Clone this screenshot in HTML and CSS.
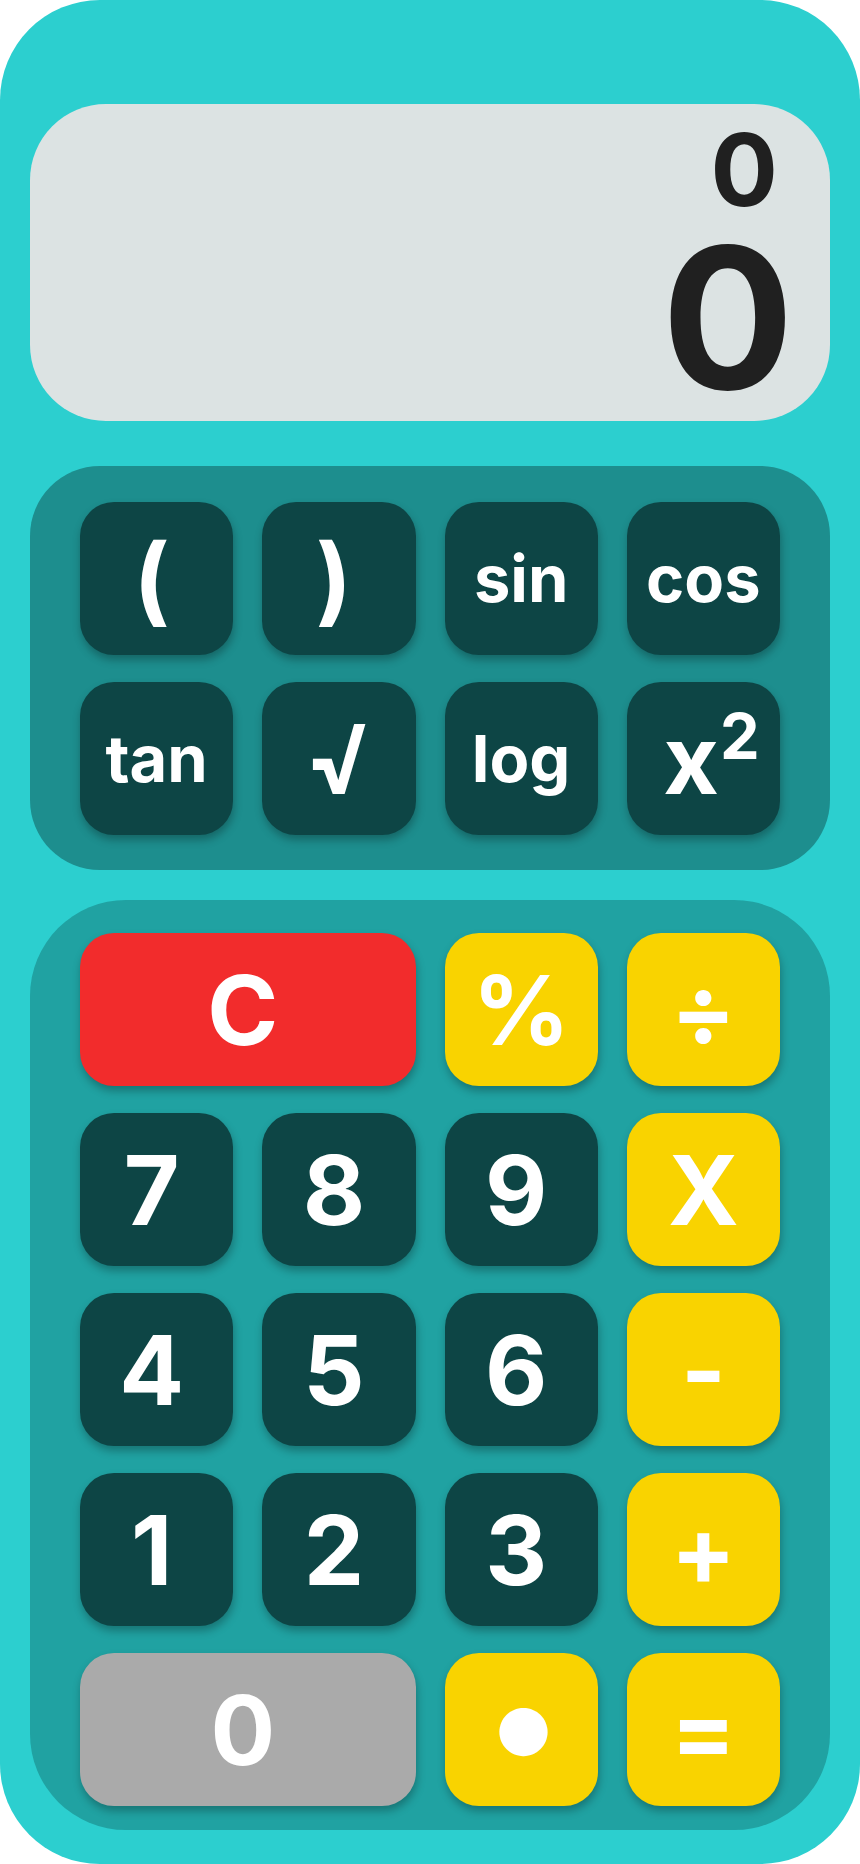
FILE: index.html
```html
<!DOCTYPE html>
<html lang="en">
<head>
<meta charset="utf-8">
<title>Calculator</title>
<link rel="stylesheet" href="styles.css">
</head>
<body>
<div class="calc">
  <div class="display">
    <div class="expr">0</div>
    <div class="result">0</div>
  </div>
  <div class="panel funcs">
    <button class="key dark num">(</button>
    <button class="key dark num">)</button>
    <button class="key dark word">sin</button>
    <button class="key dark word">cos</button>
    <button class="key dark word">tan</button>
    <button class="key dark">√</button>
    <button class="key dark word">log</button>
    <button class="key dark square">x<sup>2</sup></button>
  </div>
  <div class="panel main">
    <button class="key red wide num">C</button>
    <button class="key yellow">%</button>
    <button class="key yellow">÷</button>
    <button class="key dark num">7</button>
    <button class="key dark num">8</button>
    <button class="key dark num">9</button>
    <button class="key yellow">X</button>
    <button class="key dark num">4</button>
    <button class="key dark num">5</button>
    <button class="key dark num">6</button>
    <button class="key yellow">-</button>
    <button class="key dark num">1</button>
    <button class="key dark num">2</button>
    <button class="key dark num">3</button>
    <button class="key yellow">+</button>
    <button class="key gray wide num">0</button>
    <button class="key yellow dot">•</button>
    <button class="key yellow">=</button>
  </div>
</div>
</body>
</html>
```
FILE: styles.css
```css
html, body {
  margin: 0;
  padding: 0;
  background: #ffffff;
}

.calc {
  width: 860px;
  height: 1864px;
  box-sizing: border-box;
  background: #2ccfcf;
  border-radius: 100px;
  padding: 104px 30px 34px;
  display: flex;
  flex-direction: column;
  font-family: "Inter", "DejaVu Sans", sans-serif;
  font-weight: 700;
}

.display {
  height: 317px;
  box-sizing: border-box;
  background: #dce3e3;
  border-radius: 76px;
  padding: 16px 36px 0;
  text-align: right;
  color: #202020;
}

.expr {
  font-size: 100px;
  line-height: 100px;
  margin-right: 16px;
}

.result {
  font-size: 196px;
  line-height: 196px;
}

.panel {
  display: grid;
  grid-template-columns: repeat(4, 1fr);
  grid-auto-rows: 153px;
  column-gap: 29px;
  row-gap: 27px;
  padding: 0 50px;
}

.funcs {
  margin-top: 45px;
  background: #1d8e8e;
  border-radius: 70px;
  padding-top: 36px;
  padding-bottom: 35px;
}

.main {
  margin-top: 30px;
  background: #20a2a2;
  border-radius: 96px;
  padding-top: 33px;
  padding-bottom: 24px;
}

.key {
  border: none;
  margin: 0;
  padding: 0;
  border-radius: 34px;
  font-family: inherit;
  font-weight: 700;
  font-size: 96px;
  line-height: 1;
  color: #ffffff;
  display: flex;
  align-items: center;
  justify-content: center;
  box-shadow: 1px 5px 8px rgba(0, 0, 0, 0.28);
}

.num {
  padding-right: 10px;
}

.word {
  font-size: 65px;
}

.square {
  padding-left: 16px;
}

.square sup {
  font-size: 63px;
  line-height: 0;
  vertical-align: baseline;
  position: relative;
  top: -23px;
  margin-left: 1px;
}

.dot {
  font-size: 154px;
  padding-bottom: 18px;
  padding-left: 5px;
}

.dark {
  background: #0d4545;
}

.red {
  background: #f22c2c;
}

.yellow {
  background: #f9d300;
}

.gray {
  background: #aaaaaa;
}

.wide {
  grid-column: span 2;
}
```
